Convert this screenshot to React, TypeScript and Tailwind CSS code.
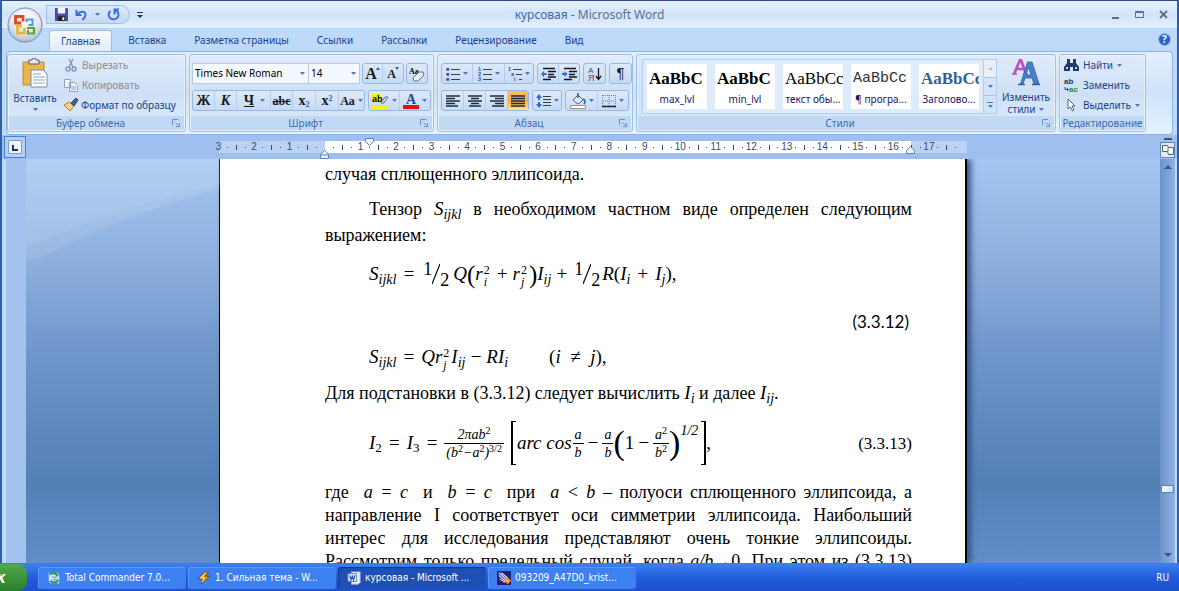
import type { ReactNode } from 'react'

const TABS = ['Главная', 'Вставка', 'Разметка страницы', 'Ссылки', 'Рассылки', 'Рецензирование', 'Вид']

const STYLES = [
  { sample: 'AaBbC', name: 'max_lvl', font: "font-['Liberation_Serif',serif] font-bold text-[17px] text-black" },
  { sample: 'AaBbC', name: 'min_lvl', font: "font-['Liberation_Serif',serif] font-bold text-[17px] text-black" },
  { sample: 'AaBbCc', name: 'текст обы...', font: "font-['Liberation_Serif',serif] text-[17px] text-black" },
  { sample: 'AaBbCc', name: '¶ програ...', font: "font-['Liberation_Mono',monospace] text-[15px] text-[#333]" },
  { sample: 'AaBbCc', name: 'Заголово...', font: "font-['Liberation_Serif',serif] font-bold text-[17px] text-[#365f91]" },
]

const RULER = ['3', '2', '1', '', ...Array.from({ length: 17 }, (_, i) => String(i + 1))]

/* ---------- small pieces ---------- */

function Caret({ className = '' }: { className?: string }) {
  return (
    <svg viewBox="0 0 5 3" className={`w-[5px] h-[3px] shrink-0 ${className}`} aria-hidden="true">
      <path d="M0 0h5L2.500 3z" fill="#4a7ab8" />
    </svg>
  )
}

function Group({ title, width, launcher = true, children }: { title: string; width: string; launcher?: boolean; children: ReactNode }) {
  return (
    <section className={`${width} shrink-0 flex flex-col rounded-[3px] border border-[#9dbfe8] bg-linear-to-b from-[#dfebfa] via-[#cfe0f6] to-[#dcebfc] shadow-[inset_0_0_0_1px_#e8f2fd] overflow-hidden`}>
      <div className="flex-1 min-h-0">{children}</div>
      <div className="h-[14px] mx-px mb-px flex items-center bg-[#c1d9f5] text-[#3e6aaa]">
        <span className="flex-1 text-center whitespace-nowrap">{title}</span>
        {launcher && (
          <button aria-label={`${title}: параметры`} className="pr-1">
            <svg viewBox="0 0 8 8" className="w-2 h-2" fill="none" stroke="#6a8fc4">
              <path d="M.5 6V.5H6M3.500 3.500l3 3M7.500 4v3.500H4" />
            </svg>
          </button>
        )}
      </div>
    </section>
  )
}

function Set({ children }: { children: ReactNode }) {
  return (
    <div className="h-[21px] flex rounded-[3px] border border-[#9ab8df] bg-linear-to-b from-[#dce9fa] to-[#c6dbf5] divide-x divide-[#b4cdee]">
      {children}
    </div>
  )
}

function Tool({ label, w, caret, active, children }: { label: string; w: string; caret?: boolean; active?: boolean; children: ReactNode }) {
  return (
    <button
      aria-label={label}
      className={`${w} flex items-center justify-center gap-[3px] text-[#16181c] ${active ? 'bg-linear-to-b from-[#f7c069] via-[#fba947] to-[#fde38b]' : ''}`}
    >
      {children}
      {caret && <Caret />}
    </button>
  )
}

function Lines({ rows }: { rows: [number, number][] }) {
  return (
    <svg viewBox="0 0 14 12" className="w-[14px] h-3" stroke="#222b3a" strokeWidth="1.400">
      {rows.map(([a, b], i) => <path key={i} d={`M${a} ${i * 2.5 + 1}H${b}`} />)}
    </svg>
  )
}

/* ---------- title bar ---------- */

function OfficeButton() {
  return (
    <button aria-label="Office" className="absolute left-[5px] top-[6px] z-10">
      <svg viewBox="0 0 36 36" className="w-9 h-9">
        <defs>
          <radialGradient id="orb" cx=".5" cy=".3" r=".75">
            <stop offset="0" stopColor="#fff" />
            <stop offset=".55" stopColor="#e3e8f0" />
            <stop offset="1" stopColor="#a9b6cb" />
          </radialGradient>
        </defs>
        <circle cx="18" cy="18" r="17" fill="url(#orb)" stroke="#7187ad" />
        <g fill="none">
          <path d="M14 16H8.500V9.500h7.500v5" stroke="#e2481c" strokeWidth="2.800" />
          <path d="M19.500 15v-2.500h6V18h-4" stroke="#4c9be0" strokeWidth="2" />
          <path d="M15 19h-4.500v7h7v-5" stroke="#f4b51c" strokeWidth="2.600" />
          <path d="M20 21h7v5.500h-6V23" stroke="#5da532" strokeWidth="2.200" />
        </g>
      </svg>
    </button>
  )
}

function TitleBar() {
  return (
    <header className="h-7 shrink-0 flex items-center bg-linear-to-b from-[#e6f1fe] via-[#d2e4fb] to-[#e2effd] border-b border-[#b5d0f2]">
      <div className="flex-1 flex items-center">
        <div className="ml-[44px] h-[19px] w-[84px] pl-[8px] flex items-center gap-[7px] rounded-r-full border border-[#a3bfe6] bg-linear-to-b from-[#dbe8fb] to-[#c5daf6]">
          <button aria-label="Сохранить">
            <svg viewBox="0 0 14 14" className="w-[13px] h-[13px]">
              <path d="M0 0h13l1 1v13H0z" fill="#4a48b0" />
              <path d="M3 0h8v6H3z" fill="#eef3ff" />
              <path d="M3 9h8v5H3z" fill="#222" />
              <path d="M8 10h2v3H8z" fill="#fff" />
            </svg>
          </button>
          <button aria-label="Отменить">
            <svg viewBox="0 0 13 12" className="w-[13px] h-3" fill="none" stroke="#3c6fd0" strokeWidth="2">
              <path d="M1.500 1v5h5M2.500 5.500C5 1.500 11 2 10.500 6 10.200 8.500 8.500 9.500 7.500 11" />
            </svg>
          </button>
          <Caret />
          <button aria-label="Повторить">
            <svg viewBox="0 0 13 13" className="w-[13px] h-[13px]" fill="none" stroke="#3c6fd0" strokeWidth="2">
              <path d="M3.500 3C.5 5 1.500 10 4.500 11s7-.5 7-4.500C11.500 4.500 10 3 8 2.500M7.500 6.500v-5H12" />
            </svg>
          </button>
        </div>
        <button aria-label="Настройка панели" className="ml-[7px]">
          <svg viewBox="0 0 6 6" className="w-[6px] h-[6px]"><path d="M0 0h6v1H0zM0 3h6L3 6z" fill="#22345a" /></svg>
        </button>
      </div>
      <h1 className="text-[12px] text-[#3e6aaa]">курсовая - <span className="text-[#5d6f8f]">Microsoft Word</span></h1>
      <div className="flex-1 flex justify-end items-center gap-[15px] text-[#5d6d85]">
        <button aria-label="Свернуть"><svg viewBox="0 0 9 9" className="w-[9px] h-[9px]"><path d="M1 7h7v2H1z" fill="currentColor" /></svg></button>
        <button aria-label="Развернуть"><svg viewBox="0 0 9 9" className="w-[9px] h-[9px]" fill="none" stroke="currentColor"><path d="M.5 1.500h8v6h-8zM.5 2.500h8" /></svg></button>
        <button aria-label="Закрыть" className="mr-[9px]"><svg viewBox="0 0 9 9" className="w-[9px] h-[9px]" fill="none" stroke="currentColor" strokeWidth="1.800"><path d="M1 1l7 7M8 1L1 8" /></svg></button>
      </div>
    </header>
  )
}

function TabRow() {
  return (
    <nav className="h-[22px] shrink-0 flex items-end pl-[47px] pr-[6px]">
      {TABS.map((t, i) => (
        <button
          key={t}
          className={`h-[21px] mr-1 whitespace-nowrap text-[#15428b] ${i === 0 ? 'px-[11px] rounded-t-[3px] border border-b-0 border-[#9dbfe8] bg-linear-to-b from-[#f6faff] to-[#e1edfb]' : 'px-[12px]'}`}
        >
          {t}
        </button>
      ))}
      <button aria-label="Справка" className="ml-auto mb-[5px] w-[13px] h-[13px] rounded-full border border-[#9ab8ea] bg-[#2a62cc] text-white text-[10px] leading-[11px] font-bold">?</button>
    </nav>
  )
}

/* ---------- ribbon ---------- */

function Clipboard() {
  return (
    <div className="flex pl-[4px]">
      <button className="w-[46px] pt-[3px] flex flex-col items-center text-[#15428b]">
        <svg viewBox="0 0 26 30" className="w-[26px] h-[30px]">
          <path d="M1 4h21v23H1z" fill="#e9b650" stroke="#b98a34" />
          <path d="M7 2h3a2 2 0 0 1 4 0h3v4H7z" fill="#e5e7ea" stroke="#555d6b" />
          <path d="M9 12h12l4 4v13H9z" fill="#fff" stroke="#7d8ca8" />
          <path d="M11 16h8M11 19h12M11 22h12M11 25h12" stroke="#8aa4cf" />
        </svg>
        <span className="leading-[16px] mt-[2px]">Вставить</span>
        <Caret className="mt-[2px]" />
      </button>
      <div className="flex flex-col pl-[6px]">
        <button disabled className="h-5 flex items-center gap-1 text-[#8d8d8d]">
          <svg viewBox="0 0 14 14" className="w-[14px] h-[14px]" fill="none" stroke="#8499b8" strokeWidth="1.500">
            <path d="M5 1l4 8M9 1L5 9" /><circle cx="4" cy="11" r="2" /><circle cx="10" cy="11" r="2" />
          </svg>
          Вырезать
        </button>
        <button disabled className="h-5 flex items-center gap-1 text-[#8d8d8d]">
          <svg viewBox="0 0 14 14" className="w-[14px] h-[14px]" fill="#f0f4fa" stroke="#8fa3c0">
            <path d="M.5 1.500h6v8h-6zM5.500 4.500h5l3 3v6h-8z" /><path d="M7 9h5M7 11h5" />
          </svg>
          Копировать
        </button>
        <button className="h-5 flex items-center gap-[2px] text-[#15428b] whitespace-nowrap">
          <svg viewBox="0 0 15 14" className="w-[15px] h-[14px]">
            <path d="M0 7l5-3 5 4-4 5z" fill="#f1d384" stroke="#a98533" />
            <path d="M7 5l5-5 2 2-4 6z" fill="#4c5f94" stroke="#2e3c6b" />
          </svg>
          Формат по образцу
        </button>
      </div>
    </div>
  )
}

const serif = "font-['Liberation_Serif',serif]"

function FontGroup() {
  return (
    <div className="flex flex-col gap-[6px] pt-[8px] pl-[2px]">
      <div className="flex gap-[2px]">
        <div className="relative w-[117px]">
          <select aria-label="Шрифт" className="w-full h-[21px] appearance-none border border-[#b3cbeb] bg-[#f4f9ff] pl-[2px] text-black">
            <option>Times New Roman</option>
          </select>
          <Caret className="absolute right-[4px] top-[9px]" />
        </div>
        <div className="relative w-[52px] -ml-[3px]">
          <select aria-label="Размер" className="w-full h-[21px] appearance-none border border-[#b3cbeb] bg-[#f4f9ff] pl-[2px] text-black">
            <option>14</option>
          </select>
          <Caret className="absolute right-[4px] top-[9px]" />
        </div>
        <Set>
          <Tool label="Увеличить размер" w="w-[20px]">
            <span className={`${serif} font-bold text-[16px] leading-none`}>A</span>
            <svg viewBox="0 0 4 3" className="w-1 h-[3px] -ml-1 mb-[10px]"><path d="M0 3h4L2 0z" fill="#2c5fb5" /></svg>
          </Tool>
          <Tool label="Уменьшить размер" w="w-[20px]">
            <span className={`${serif} font-bold text-[12px] leading-none`}>A</span>
            <svg viewBox="0 0 4 3" className="w-1 h-[3px] -ml-1 mb-[10px]"><path d="M0 0h4L2 3z" fill="#2c5fb5" /></svg>
          </Tool>
        </Set>
        <Set>
          <Tool label="Очистить формат" w="w-[20px]">
            <svg viewBox="0 0 16 16" className="w-4 h-4">
              <text x="0" y="8" fontSize="8" fontFamily="Liberation Serif" fontWeight="bold">Aa</text>
              <path d="M4 12l6-6h4l1 3-6 6H5z" fill="#f3f3f8" stroke="#5d6d95" />
            </svg>
          </Tool>
        </Set>
      </div>
      <div className={`flex gap-[3px] ${serif} text-[14px] font-bold`}>
        <Set>
          <Tool label="Полужирный" w="w-[22px]">Ж</Tool>
          <Tool label="Курсив" w="w-[22px]"><i>К</i></Tool>
          <Tool label="Подчеркнутый" w="w-[34px]" caret><span className="underline pl-[2px] pr-[3px]">Ч</span></Tool>
          <Tool label="Зачеркнутый" w="w-[22px]"><s className="text-[12px]">abc</s></Tool>
          <Tool label="Подстрочный" w="w-[23px]"><span>x<sub className="text-[8px] text-[#2c5fb5]">2</sub></span></Tool>
          <Tool label="Надстрочный" w="w-[23px]"><span>x<sup className="text-[8px] text-[#2c5fb5]">2</sup></span></Tool>
          <Tool label="Регистр" w="w-[25px]" caret><span className="text-[12px]">Aa</span></Tool>
        </Set>
        <Set>
          <Tool label="Цвет выделения" w="w-[31px]" caret>
            <svg viewBox="0 0 17 16" className="w-[17px] h-4">
              <path d="M0 1h9v8H0zM0 12h16v4H0z" fill="#f3f01b" />
              <text x="0" y="9" fontSize="9" fontFamily="Liberation Sans">ab</text>
              <path d="M9 10l4-6h3l-4 6z" fill="#d9e2f2" stroke="#5c709c" />
            </svg>
          </Tool>
          <Tool label="Цвет текста" w="w-[30px]" caret>
            <svg viewBox="0 0 16 16" className="w-4 h-4">
              <text x="3" y="11" fontSize="14" fontFamily="Liberation Serif" fontWeight="bold" fill="#23488f">A</text>
              <path d="M0 12h16v4H0z" fill="#e01010" />
            </svg>
          </Tool>
        </Set>
      </div>
    </div>
  )
}

function ListIcon({ marks, step }: { marks: string[]; step?: boolean }) {
  return (
    <svg viewBox="0 0 14 14" className="w-[14px] h-[14px]">
      {marks.map((m, i) => (
        <g key={i}>
          <text x={step ? i * 3 : 0} y={i * 5 + 4} fontSize="5.500" fontFamily="Liberation Sans" fontWeight="bold" fill="#2850a0">{m}</text>
          <path d={`M${step ? i * 3 + 5 : 5} ${i * 5 + 2.5}H14`} stroke="#3a3f48" />
        </g>
      ))}
    </svg>
  )
}

function IndentIcon({ right }: { right?: boolean }) {
  return (
    <svg viewBox="0 0 15 14" className="w-[15px] h-[14px]">
      <path d="M2 1.500h12M7 4.500h8M7 7.500h6M7 10h8M2 12.500h8" stroke="#14171c" strokeWidth="1.400" />
      <path d={right ? 'M5.500 7L2.500 4v2H0v2h2.500v2z' : 'M0 7l3-3v2h2.500v2H3v2z'} fill="#2f6bd0" />
    </svg>
  )
}

function ParagraphGroup() {
  return (
    <div className="flex flex-col gap-[6px] pt-[8px] pl-[3px]">
      <div className="flex gap-[3px]">
        <Set>
          <Tool label="Маркеры" w="w-[31px]" caret><ListIcon marks={['■', '■', '■']} /></Tool>
          <Tool label="Нумерация" w="w-[32px]" caret><ListIcon marks={['1', '2', '3']} /></Tool>
          <Tool label="Многоуровневый список" w="w-[28px]" caret><ListIcon marks={['1', 'a', 'i']} step /></Tool>
        </Set>
        <Set>
          <Tool label="Уменьшить отступ" w="w-[21px]"><IndentIcon /></Tool>
          <Tool label="Увеличить отступ" w="w-[20px]"><IndentIcon right /></Tool>
        </Set>
        <Set>
          <Tool label="Сортировка" w="w-[21px]">
            <svg viewBox="0 0 14 16" className="w-[14px] h-4">
              <text x="0" y="7" fontSize="8" fontFamily="Liberation Sans" fill="#2850a0">А</text>
              <text x="0" y="15" fontSize="9" fontFamily="Liberation Sans" fill="#a02a3a">Я</text>
              <path d="M10.500 2v11M8 10l2.500 3.500L13 10" fill="none" stroke="#14171c" strokeWidth="1.300" />
            </svg>
          </Tool>
        </Set>
        <Set>
          <Tool label="Знаки абзаца" w="w-[21px]"><span className="font-['Liberation_Sans',sans-serif] text-[15px]">¶</span></Tool>
        </Set>
      </div>
      <div className="flex gap-[3px]">
        <Set>
          <Tool label="По левому краю" w="w-[22px]"><Lines rows={[[0, 14], [0, 9], [0, 14], [0, 9], [0, 12]]} /></Tool>
          <Tool label="По центру" w="w-[22px]"><Lines rows={[[0, 14], [3, 11], [0, 14], [3, 11], [1, 13]]} /></Tool>
          <Tool label="По правому краю" w="w-[22px]"><Lines rows={[[0, 14], [5, 14], [0, 14], [5, 14], [2, 14]]} /></Tool>
          <Tool label="По ширине" w="w-[20px]" active><Lines rows={[[0, 14], [0, 14], [0, 14], [0, 14], [0, 14]]} /></Tool>
        </Set>
        <Set>
          <Tool label="Интервал" w="w-[28px]" caret>
            <svg viewBox="0 0 15 14" className="w-[15px] h-[14px]">
              <path d="M3 0l3 4H4v2H2V4H0zM3 14l3-4H4V8H2v2H0z" fill="#2f6bd0" />
              <path d="M7 2.500h8M7 5.500h8M7 8.500h8M7 11.500h8" stroke="#3a3f48" strokeWidth="1.200" />
            </svg>
          </Tool>
        </Set>
        <Set>
          <Tool label="Заливка" w="w-[32px]" caret>
            <svg viewBox="0 0 16 16" className="w-4 h-4">
              <path d="M3 7l5-5 5 5-5 4z" fill="#e8eef8" stroke="#4f638f" />
              <path d="M8 5V0M13 6c3 1 2 4 1 5" fill="none" stroke="#2f5db5" strokeWidth="1.600" />
              <path d="M.5 12.500h15v3H.5z" fill="#fff" stroke="#b08c68" />
            </svg>
          </Tool>
          <Tool label="Границы" w="w-[30px]" caret>
            <svg viewBox="0 0 14 14" className="w-[14px] h-[14px]" fill="none" stroke="#6c7f9e">
              <path d="M.5 1v11M13.500 1v11M7 1v11M1 1.500h12M1 7h12" strokeDasharray="1 1" /><path d="M0 12.500h14" stroke="#222" strokeWidth="1.500" />
            </svg>
          </Tool>
        </Set>
      </div>
    </div>
  )
}

function StylesGroup() {
  return (
    <div className="flex pt-[4px] pl-[5px]">
      <div className="h-[55px] flex border border-[#b3cdf0] bg-[#deebfb] pl-[4px]">
        <div className="flex items-center gap-[8px]">
          {STYLES.map((s) => (
            <button key={s.name} className="w-[60px] h-[45px] flex flex-col items-center bg-white overflow-hidden">
              <span className={`w-full h-[27px] pl-[2px] pt-[3px] text-left leading-[24px] whitespace-nowrap overflow-hidden ${s.font}`}>{s.sample}</span>
              <span className="leading-[16px] whitespace-nowrap text-[#1a1464]">{s.name}</span>
            </button>
          ))}
        </div>
        <div className="ml-[4px] w-[13px] flex flex-col divide-y divide-[#a9c4ea] border-l border-[#b3cdf0] bg-[#d3e3f8]">
          <button aria-label="Вверх" className="flex-1 flex items-center justify-center bg-[#eceff4]"><Caret className="rotate-180 opacity-40" /></button>
          <button aria-label="Вниз" className="flex-1 flex items-center justify-center"><Caret /></button>
          <button aria-label="Все стили" className="flex-1 flex flex-col items-center justify-center gap-[2px]"><span className="w-[6px] h-px bg-[#4a7ab8]" /><Caret /></button>
        </div>
      </div>
      <button className="flex-1 flex flex-col items-center text-[#15428b]">
        <svg viewBox="0 0 28 27" className="w-7 h-[27px]">
          <path d="M2 15L8 1h1l5 14M4 10h8" fill="none" stroke="#b94fc0" strokeWidth="2.600" />
          <path d="M0 15h5M11 15h5" stroke="#b94fc0" strokeWidth="1.500" />
          <path d="M15.500 3h4.500l7 22h-5l-2-6h-7l-2 6H8.500zM14 16h5l-2.500-8z" fill="#4a80c8" stroke="#2f5fa5" strokeWidth=".8" fillRule="evenodd" />
          <path d="M6 25.500h7M20 25.500h8" stroke="#2f5fa5" strokeWidth="1.600" />
        </svg>
        <span className="leading-[12px] mt-[5px]">Изменить</span>
        <span className="leading-[12px] flex items-center gap-[4px]">стили <Caret /></span>
      </button>
    </div>
  )
}

function EditGroup() {
  return (
    <div className="flex flex-col pl-[4px] text-[#15428b]">
      <button className="h-5 flex items-center gap-1">
        <svg viewBox="0 0 15 14" className="w-[15px] h-[14px]" fill="#1f3c72">
          <path d="M3 1h3v4h3V1h3v4l3 4v4H9V9H6v4H0V9l3-4z" /><path d="M2 9h2v2H2zM11 9h2v2h-2z" fill="#bcd2f2" />
        </svg>
        Найти <Caret />
      </button>
      <button className="h-5 flex items-center gap-1">
        <svg viewBox="0 0 15 14" className="w-[15px] h-[14px]" fontFamily="Liberation Sans" fontWeight="bold">
          <text x="0" y="6" fontSize="8" fill="#2c3444">ab</text>
          <text x="5" y="14" fontSize="8" fill="#1f8a34">ac</text>
          <path d="M1 9v2.500h3M3 10l1.500 1.500L3 13" fill="none" stroke="#2850a0" />
        </svg>
        Заменить
      </button>
      <button className="h-5 flex items-center gap-1">
        <svg viewBox="0 0 15 14" className="w-[15px] h-[14px]"><path d="M4 1v10l2.500-2 2 4 1.500-1-2-4h3z" fill="#fff" stroke="#4f638f" /></svg>
        Выделить <Caret />
      </button>
    </div>
  )
}

/* ---------- ruler ---------- */

function Ruler() {
  return (
    <div className="relative w-[756px] h-[24px] pt-[6px] overflow-hidden">
      <div className="h-[12px] bg-[linear-gradient(90deg,transparent_4px,#bad3f5_4px,#bad3f5_110px,#fff_110px,#fff_696px,#bad3f5_696px,#bad3f5_752px,transparent_752px)]">
        <div className="w-[746px] -ml-px grid grid-cols-[repeat(21,minmax(0,1fr))] text-[10px] leading-[12px] text-[#3c4a66] font-['Liberation_Sans',sans-serif]">
          {RULER.map((n, i) => (
            <div key={i} className="grid grid-cols-4 items-center justify-items-center">
              <span>{n}</span>
              <span className="w-px h-px bg-current" />
              <span className="w-px h-[5px] bg-current" />
              <span className="w-px h-px bg-current" />
            </div>
          ))}
        </div>
      </div>
      <svg viewBox="0 0 9 12" className="absolute left-[105px] bottom-0 w-[9px] h-3" fill="#e9f1fc" stroke="#5f83ba"><path d="M.5 11.500v-4L4.500 3l4 4.500v4zM.5 8h8" /></svg>
      <svg viewBox="0 0 9 8" className="absolute left-[150px] top-[3px] w-[9px] h-2" fill="#e9f1fc" stroke="#5f83ba"><path d="M.5.5h8v3l-4 4-4-4z" /></svg>
      <svg viewBox="0 0 9 8" className="absolute left-[691px] bottom-[5px] w-[9px] h-2" fill="#e9f1fc" stroke="#5f83ba"><path d="M.5 7.500v-3l4-4 4 4v3z" /></svg>
    </div>
  )
}

/* ---------- formulas ---------- */

function Sub({ children }: { children: ReactNode }) {
  return <sub className="text-[14px]">{children}</sub>
}

function Both({ up, down }: { up: string; down: string }) {
  return (
    <span className="ml-px mr-[2px] inline-flex flex-col align-middle text-[12px] leading-[12px]">
      <span className="not-italic">{up}</span>
      <span>{down}</span>
    </span>
  )
}

function Half() {
  return (
    <span className="inline-flex items-center not-italic mx-[2px]">
      <span className="self-start text-[18px] leading-[20px]">1</span>
      <svg viewBox="0 0 8 24" className="w-[8px] h-6" stroke="#000" strokeWidth="1.200"><path d="M0 22L8 2" /></svg>
      <span className="self-end text-[18px] leading-[18px] pt-3">2</span>
    </span>
  )
}

function Frac({ top, bottom }: { top: ReactNode; bottom: ReactNode }) {
  return (
    <span className="inline-flex flex-col items-center text-[14px] leading-[17px]">
      <span className="px-[2px]">{top}</span>
      <span className="w-full border-t border-black text-center px-[2px]">{bottom}</span>
    </span>
  )
}

function Sq({ children }: { children: ReactNode }) {
  return <sup className="text-[10px] not-italic leading-none">{children}</sup>
}

const mathRow = 'shrink-0 flex items-center italic text-[19px] leading-[30px] whitespace-nowrap pl-[44px]'

function Page() {
  return (
    <article className={`w-[748px] shrink-0 flex flex-col overflow-hidden border-l border-r-2 border-black bg-white pl-[105px] pr-[53px] pt-[4px] shadow-[4px_0_6px_#31548a] ${serif} text-[18px] leading-[23px] text-black`}>
      <p>случая сплющенного эллипсоида.</p>
      <p className="mt-[10px] leading-[26px] indent-[44px] text-justify [text-align-last:justify]">
        Тензор <i className="text-[19px] leading-none">S<Sub>ijkl</Sub></i> в необходимом частном виде определен следующим
      </p>
      <p className="leading-[26px]">выражением:</p>
      <div className={`${mathRow} mt-[6px] h-10`}>
        <span>S<Sub>ijkl</Sub></span>
        <span className="mx-[6px]">=</span>
        <Half />
        <span className="ml-[2px]">Q</span>
        <span className="not-italic text-[25px] leading-none">(</span>
        <span>r<Both up="2" down="i" /></span>
        <span className="mx-[4px]">+</span>
        <span>r<Both up="2" down="j" /></span>
        <span className="not-italic text-[25px] leading-none">)</span>
        <span>I<Sub>ij</Sub></span>
        <span className="mx-[4px]">+</span>
        <Half />
        <span>R<span className="not-italic">(</span>I<Sub>i</Sub></span>
        <span className="mx-[6px]">+</span>
        <span>I<Sub>j</Sub><span className="not-italic">),</span></span>
      </div>
      <p className="mt-[16px] leading-[24px] text-[17px] text-right pr-[3px] font-['Lato',sans-serif]">(3.3.12)</p>
      <div className={`${mathRow} mt-[9px] h-7`}>
        <span>S<Sub>ijkl</Sub></span>
        <span className="mx-[6px]">=</span>
        <span>Qr<Both up="2" down="j" />I<Sub>ij</Sub></span>
        <span className="mx-[4px]">−</span>
        <span>RI<Sub>i</Sub></span>
        <span className="ml-[41px]"><span className="not-italic">(</span>i &nbsp;≠ &nbsp;j<span className="not-italic">),</span></span>
      </div>
      <p className="mt-[9px] leading-[26px] whitespace-pre">
        Для подстановки в (3.3.12) следует вычислить{' '}<i className="text-[19px] leading-none">I<Sub>i</Sub></i> и далее <i className="text-[19px] leading-none">I<Sub>ij</Sub></i>.
      </p>
      <div className="shrink-0 mt-[12px] h-[50px] flex items-center justify-between">
        <div className={mathRow}>
          <span>I<sub className="text-[13px] not-italic">2</sub></span>
          <span className="mx-[6px]">=</span>
          <span>I<sub className="text-[13px] not-italic">3</sub></span>
          <span className="mx-[6px]">=</span>
          <Frac top={<>2πab<Sq>2</Sq></>} bottom={<>(b<Sq>2</Sq>−a<Sq>2</Sq>)<Sq>3/2</Sq></>} />
          <span className="ml-[7px] w-[5px] h-[44px] border border-l-2 border-r-0 border-black" />
          <span className="mx-px">arc cos</span>
          <Frac top="a" bottom="b" />
          <span className="mx-[3px]">−</span>
          <Frac top="a" bottom="b" />
          <span className="not-italic text-[34px] leading-none">(</span>
          <span className="not-italic">1</span>
          <span className="mx-[3px]">−</span>
          <Frac top={<>a<Sq>2</Sq></>} bottom={<>b<Sq>2</Sq></>} />
          <span className="not-italic text-[34px] leading-none">)</span>
          <span className="self-start pt-[3px] pr-[3px] text-[14px] leading-[14px]">1/2</span>
          <span className="w-[5px] h-[44px] border border-r-2 border-l-0 border-black" />
          <span className="not-italic">,</span>
        </div>
        <span className="text-[17px]">(3.3.13)</span>
      </div>
      <p className="mt-[13px] text-justify [text-align-last:justify] whitespace-nowrap">
        где &nbsp;<i>a = c</i>&nbsp; и &nbsp;<i>b = c</i>&nbsp; при &nbsp;<i>a &lt; b</i> – полуоси сплющенного эллипсоида, а<br />
        направление I соответствует оси симметрии эллипсоида. Наибольший<br />
        интерес для исследования представляют очень тонкие эллипсоиды.<br />
        Рассмотрим только предельный случай, когда <i>a/b</i>→0. При этом из (3.3.13)
      </p>
    </article>
  )
}

/* ---------- task bar ---------- */

const TASKS = [
  {
    title: 'Total Commander 7.0...',
    icon: <><path d="M2 2h10l2 3v9H4L2 11z" fill="#cfe6ef" /><path d="M3 4c4-3 8-1 9 2M13 10c-2 4-7 4-9 1" fill="none" stroke="#2f9b4c" strokeWidth="2.500" /><path d="M6 7h5M7 10h4" stroke="#3f76b5" /></>,
  },
  {
    title: '1. Сильная тема - W...',
    icon: <><path d="M9 1h4L9 6h5l-9 9 2-6H1z" fill="#f6a51a" stroke="#6b420c" /><path d="M10 2L4 8h4l-2 5" fill="none" stroke="#fff3c4" /></>,
  },
  {
    title: 'курсовая - Microsoft ...',
    active: true,
    icon: <><path d="M5 1h10v12l-2 2H5z" fill="#f4f7fd" stroke="#9bb4de" /><path d="M1 3h10v9H1z" fill="#e3ecfb" stroke="#4d75bf" /><path d="M3 5l1.500 5L6 6l1.500 4L9 5" fill="none" stroke="#2a55ad" strokeWidth="1.400" /></>,
  },
  {
    title: '093209_A47D0_krist...',
    icon: <><path d="M0 0h16v16H0z" fill="#2b1a80" /><path d="M2 2l9 8M2 5l8 7M5 2l7 6M3 9l6 4" stroke="#e6e6f5" strokeWidth="1.300" /><path d="M12 7l4 4-4 4-3-4z" fill="#f5a91a" /></>,
  },
]

function TaskBar() {
  return (
    <footer className="h-[28px] shrink-0 flex items-center border-t border-[#3b7be8] bg-linear-to-b from-[#3a80f0] via-[#235bdc] to-[#1f50cc] font-['DejaVu_Sans_Condensed','DejaVu_Sans',sans-serif] text-white">
      <button aria-label="Пуск" className="w-[27px] h-full rounded-r-[9px] bg-linear-to-b from-[#55a850] via-[#3c9438] to-[#2c7d2c] text-left text-[16px] leading-none font-bold italic overflow-hidden">
        <span className="-ml-[4px]">к</span>
      </button>
      <div className="ml-[11px] flex gap-[2px]">
        {TASKS.map((t) => (
          <button
            key={t.title}
            className={`w-[148px] h-[22px] px-[9px] flex items-center gap-[4px] rounded-[3px] whitespace-nowrap ${t.active ? 'bg-[#1d4fb4] shadow-[inset_1px_1px_1px_#12378a]' : 'bg-[#3c80f2] shadow-[inset_1px_1px_0_#5b98fa]'}`}
          >
            <svg viewBox="0 0 16 16" className="w-[14px] h-[14px] shrink-0">{t.icon}</svg>
            {t.title}
          </button>
        ))}
      </div>
      <span className="ml-auto pr-[10px]">RU</span>
    </footer>
  )
}

export default function App() {
  return (
    <div className="h-screen flex flex-col overflow-hidden font-['Noto_Sans','Open_Sans',sans-serif] text-[10px]">
      <div className="relative flex-1 min-h-0 flex flex-col border-t border-x-2 border-t-[#2a4a80] border-x-[#2f5fa8] bg-[#bfd9fb]">
        <OfficeButton />
        <TitleBar />
        <TabRow />
        <div className="h-[84px] shrink-0 mx-[4px] flex gap-[3px] rounded-[4px] border border-[#8db2e3] bg-linear-to-b from-[#e4effc] via-[#d0e2f8] to-[#e3f4ff] py-[2px]">
          <Group title="Буфер обмена" width="w-[179px]"><Clipboard /></Group>
          <Group title="Шрифт" width="w-[245px]"><FontGroup /></Group>
          <Group title="Абзац" width="w-[196px]"><ParagraphGroup /></Group>
          <Group title="Стили" width="w-[420px]"><StylesGroup /></Group>
          <Group title="Редактирование" width="w-[87px]" launcher={false}><EditGroup /></Group>
        </div>
        <div className="h-[24px] shrink-0 flex bg-[#9fc0ee] px-[2px]">
          <button aria-label="Табуляция" className="w-[22px] h-[22px] mt-px border border-[#4a80d0] flex items-center justify-center bg-[#b5d0f6]">
            <svg viewBox="0 0 14 14" className="w-[14px] h-[14px]"><path d="M.5.500h13v13H.5z" fill="#eef5ff" stroke="#7e9ed0" /><path d="M5 5v5h5" fill="none" stroke="#22345a" strokeWidth="2" /></svg>
          </button>
          <div className="flex-1 flex justify-center"><Ruler /></div>
          <div className="w-[15px] flex flex-col items-center pt-[3px] gap-[2px]">
            <span className="w-[8px] h-[2px] bg-[#3a5480]" />
            <button aria-label="Линейка" className="w-[15px] h-[16px] border border-[#6a85b0] bg-[#e2e8f0] flex items-center justify-center">
              <svg viewBox="0 0 12 12" className="w-3 h-3" fill="#fff" stroke="#4c5f80"><path d="M.5 1.500h5l1 2h5v7h-5l-1-3h-5zM6 3.500v4" /></svg>
            </button>
          </div>
        </div>
        <main className="flex-1 min-h-0 flex px-[2px]">
          <div className="w-[22px] shrink-0 border-l-2 border-[#bfd9fb] bg-[#a3c2ee]" />
          <div className="relative flex-1 flex justify-center overflow-hidden bg-[linear-gradient(180deg,#a5c6f2_0%,#8caedc_27%,#7097cc_47%,#547fb5_80%,#628dc8_100%)]">
            <svg viewBox="0 0 200 100" preserveAspectRatio="none" className="absolute left-0 top-0 w-[200px] h-[100px]">
              <path d="M0 0h200v23Q90 50 0 88z" fill="#fff" opacity=".16" />
              <path d="M0 88Q90 50 200 23v5Q100 55 12 100H0z" fill="#fff" opacity=".1" />
            </svg>
            <Page />
          </div>
          <div className="w-[15px] shrink-0 flex flex-col items-center justify-between py-[6px] bg-linear-to-r from-[#6b93cb] to-[#8fb2e2]">
            <svg viewBox="0 0 8 4" className="w-2 h-1"><path d="M0 4h8L4 0z" fill="#3a5480" /></svg>
            <div className="w-full flex-1 flex flex-col">
              <div className="flex-[84]" />
              <div className="mx-px h-[8px] border border-[#5c7fb5] bg-linear-to-r from-white to-[#c6dbf7]" />
              <div className="flex-[16]" />
            </div>
            <svg viewBox="0 0 8 4" className="w-2 h-1"><path d="M0 0h8L4 4z" fill="#3a5480" /></svg>
          </div>
        </main>
      </div>
      <TaskBar />
    </div>
  )
}
